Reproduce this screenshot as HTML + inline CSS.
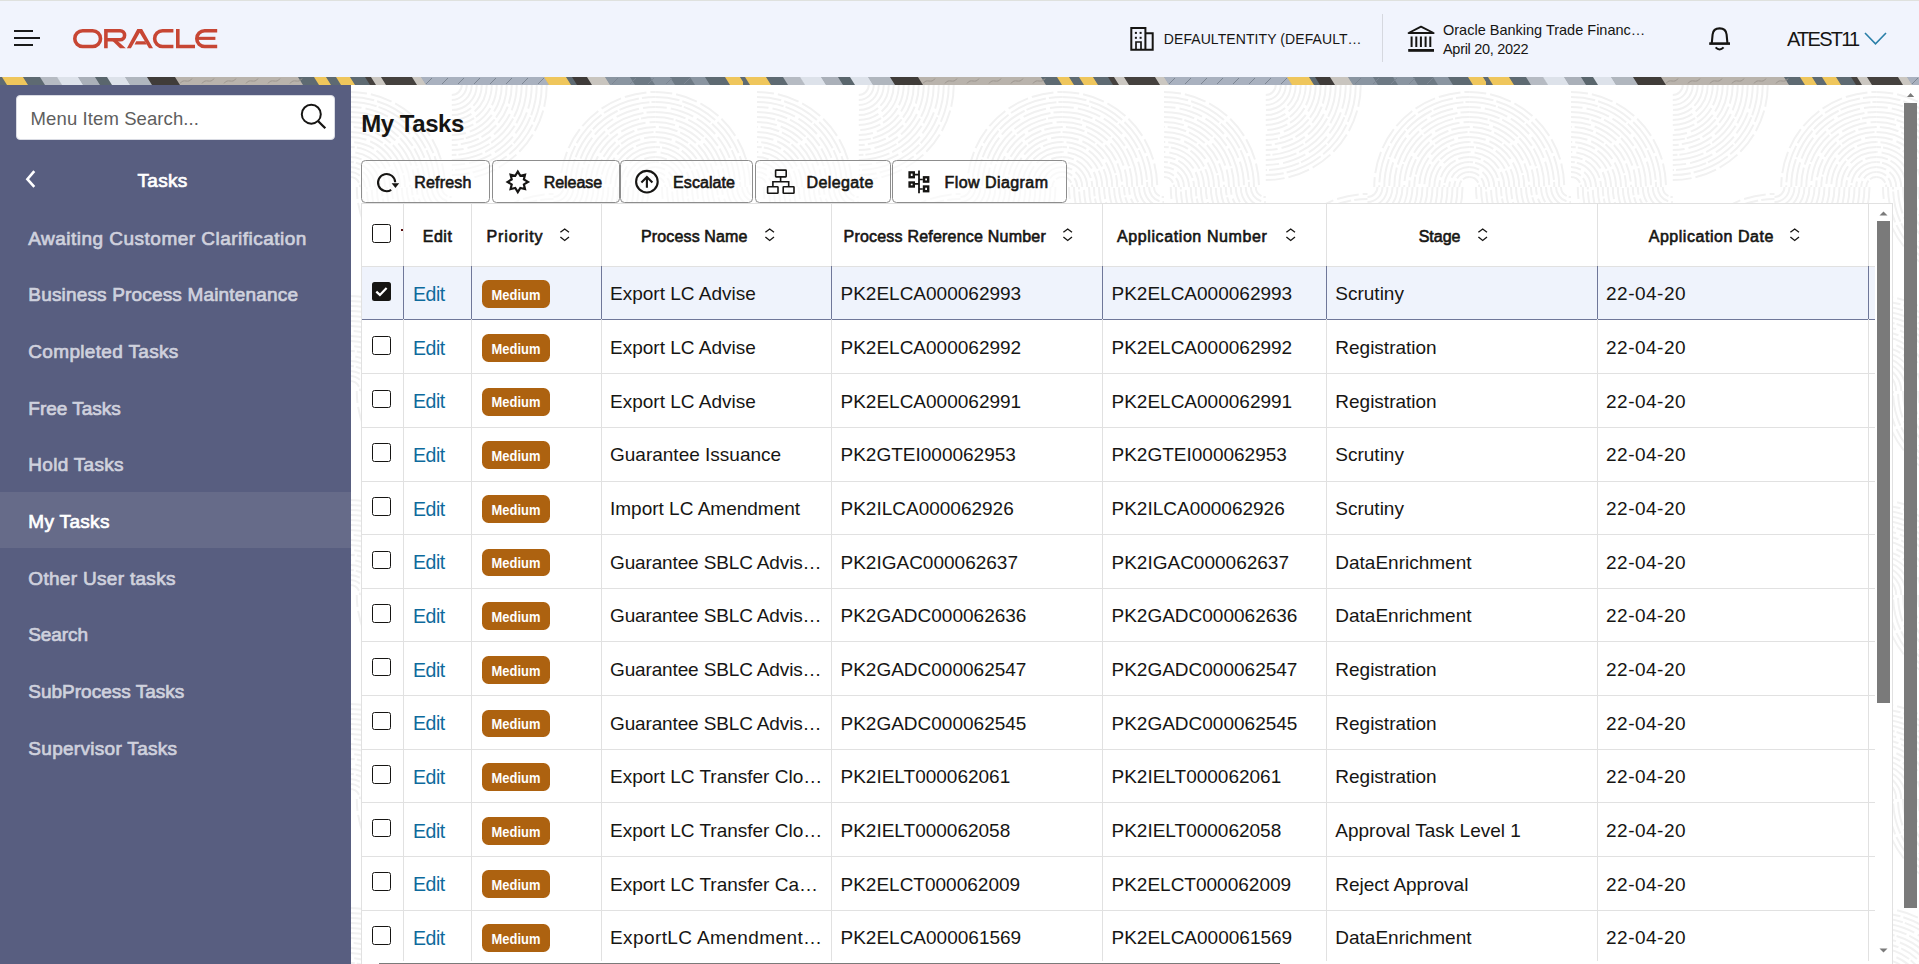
<!DOCTYPE html>
<html><head><meta charset="utf-8"><title>My Tasks</title>
<style>
html,body{margin:0;padding:0;}
body{width:1919px;height:964px;overflow:hidden;position:relative;font-family:"Liberation Sans",sans-serif;background:#fff;}
div,span,svg{box-sizing:border-box;}
.abs{position:absolute;}
</style></head><body>

<div class="abs" style="left:0;top:0;width:1919px;height:77px;background:#f1f4fd;border-top:1px solid #dfe1de;"></div>
<div class="abs" style="left:14px;top:30px;width:19px;height:2.4px;background:#1a1a1a;"></div>
<div class="abs" style="left:14px;top:37px;width:26px;height:2.4px;background:#1a1a1a;"></div>
<div class="abs" style="left:14px;top:44px;width:19px;height:2.4px;background:#1a1a1a;"></div>
<svg class="abs" style="left:73px;top:29px;overflow:visible" width="145" height="20" viewBox="0 0 145 20">
<g fill="none" stroke="#c74634" stroke-width="3.6">
<rect x="1.8" y="1.8" width="25.7" height="15.7" rx="7.85"/>
<path d="M32.9 0 V19.3 M31.1 1.8 H47.1 A4.5 4.5 0 0 1 47.1 10.8 H34"/>
<path d="M100.4 1.8 H89.5 A7.85 7.85 0 0 0 89.5 17.5 H100.4"/>
<path d="M104.8 0 V17.5 H122"/>
<path d="M144.2 1.8 H131.65 A7.85 7.85 0 0 0 131.65 17.5 H144.2"/>
</g>
<g fill="#c74634">
<polygon points="37.5,10 42.5,10 52.8,19.3 47,19.3"/>
<polygon points="53.9,19.3 64.3,0 69.1,0 80,19.3 76,19.3 66.7,3.8 57.9,19.3"/>
<polygon points="63.2,12.3 71.9,12.3 73.7,15.4 61.6,15.4"/>
<rect x="123.4" y="7.8" width="19" height="3.1"/>
</g></svg>
<svg class="abs" style="left:1125px;top:22px" width="35" height="35" viewBox="0 0 35 35">
<g fill="none" stroke="#161513" stroke-width="2">
<path d="M6.3 27.7 V6.1 H20.4 V27.7 Z M20.4 11.2 H27.7 V27.7 H20.4"/>
<path d="M11 27.7 V20 H16 V27.7" stroke-width="1.7"/>
</g>
<g fill="#161513"><rect x="9.9" y="9.9" width="2" height="2"/><rect x="14.6" y="9.9" width="2" height="2"/><rect x="9.9" y="14.8" width="2" height="2"/><rect x="14.6" y="14.8" width="2" height="2"/></g>
</svg>
<div style="position:absolute;top:30.86px;height:16.80px;line-height:16.80px;font-size:14px;font-weight:400;color:#161513;white-space:nowrap;letter-spacing:0.08px;left:1163.80px;">DEFAULTENTITY (DEFAULT…</div>
<div class="abs" style="left:1382px;top:14px;width:1px;height:48px;background:#d6d8df;"></div>
<svg class="abs" style="left:1404px;top:21px" width="35" height="35" viewBox="0 0 35 35">
<g fill="none" stroke="#161513">
<path d="M4.6 12 L17 5.6 L29.6 12 Z" stroke-width="1.9" stroke-linejoin="round"/>
<path d="M7.6 15.6 V26 M12.3 15.6 V26 M16.9 15.6 V26 M21.6 15.6 V26 M26.3 15.6 V26" stroke-width="2"/>
<path d="M4.2 29.4 H30" stroke-width="2.8"/>
</g></svg>
<div style="position:absolute;top:21.97px;height:17.40px;line-height:17.40px;font-size:14.5px;font-weight:400;color:#161513;white-space:nowrap;letter-spacing:0.0px;left:1443.00px;">Oracle Banking Trade Financ…</div>
<div style="position:absolute;top:40.77px;height:17.40px;line-height:17.40px;font-size:14.5px;font-weight:400;color:#161513;white-space:nowrap;letter-spacing:-0.3px;left:1443.00px;">April 20, 2022</div>
<svg class="abs" style="left:1702px;top:21px" width="35" height="35" viewBox="0 0 35 35">
<g fill="none" stroke="#161513" stroke-width="2.1">
<path d="M9.8 22 L10.6 13.5 C11 9.5 13.8 7.4 17.6 7.4 C21.4 7.4 24.2 9.5 24.6 13.5 L25.4 22"/>
<path d="M7.2 22.6 H28" stroke-width="2.6"/>
<path d="M13.6 26.4 Q17.6 30.6 21.6 26.4"/>
</g></svg>
<div style="position:absolute;top:27.33px;height:24.00px;line-height:24.00px;font-size:20px;font-weight:400;color:#161513;white-space:nowrap;letter-spacing:-1.75px;left:1787.00px;">ATEST11</div>
<svg class="abs" style="left:1860px;top:28px" width="30" height="20" viewBox="0 0 30 20">
<path d="M5 5 L15.5 15.8 L26 5" fill="none" stroke="#2a7fa8" stroke-width="1.6"/></svg>
<svg class="abs" style="left:0;top:77px" width="1919" height="8"><defs><pattern id="bp" x="0" y="0" width="743" height="8" patternUnits="userSpaceOnUse"><rect x="0" y="0" width="743" height="8" fill="#5e6a72"/><polygon points="0,0 2.5,0 7.5,8 5,8" fill="#5e6a72"/><polygon points="2,0 23.5,0 28.5,8 7,8" fill="#efc65c"/><polygon points="23,0 40.5,0 45.5,8 28,8" fill="#5e6a72"/><polygon points="40,0 57.5,0 62.5,8 45,8" fill="#b6bbc3"/><polygon points="57,0 78.5,0 83.5,8 62,8" fill="#dde2ea"/><polygon points="78,0 95.5,0 100.5,8 83,8" fill="#aab0b9"/><polygon points="95,0 107.5,0 112.5,8 100,8" fill="#5a666d"/><polygon points="107,0 125.5,0 130.5,8 112,8" fill="#dde2ea"/><polygon points="125,0 147.5,0 152.5,8 130,8" fill="#b0b6be"/><polygon points="147,0 175.5,0 180.5,8 152,8" fill="#403c39"/><polygon points="175,0 298.5,0 303.5,8 180,8" fill="#b9b3ac"/><polygon points="298,0 314.5,0 319.5,8 303,8" fill="#5e6a72"/><polygon points="314,0 326.5,0 331.5,8 319,8" fill="#efc65c"/><polygon points="326,0 336.5,0 341.5,8 331,8" fill="#5e6a72"/><polygon points="336,0 350.5,0 355.5,8 341,8" fill="#efc65c"/><polygon points="350,0 365.5,0 370.5,8 355,8" fill="#5e6a72"/><polygon points="365,0 371.5,0 376.5,8 370,8" fill="#45413e"/><polygon points="371,0 381.5,0 386.5,8 376,8" fill="#cbc7c1"/><polygon points="381,0 412.5,0 417.5,8 386,8" fill="#45413e"/><polygon points="412,0 421.5,0 426.5,8 417,8" fill="#cbc7c1"/><polygon points="421,0 544.5,0 549.5,8 426,8" fill="#a9b1bf"/><polygon points="544,0 566.5,0 571.5,8 549,8" fill="#efc65c"/><polygon points="566,0 572.5,0 577.5,8 571,8" fill="#5e6a72"/><polygon points="572,0 587.5,0 592.5,8 577,8" fill="#3f3b39"/><polygon points="587,0 605.5,0 610.5,8 592,8" fill="#c9c5bf"/><polygon points="605,0 630.5,0 635.5,8 610,8" fill="#8a95a1"/><polygon points="630,0 650.5,0 655.5,8 635,8" fill="#6d7984"/><polygon points="650,0 670.5,0 675.5,8 655,8" fill="#8a95a1"/><polygon points="670,0 690.5,0 695.5,8 675,8" fill="#6d7984"/><polygon points="690,0 705.5,0 710.5,8 695,8" fill="#8a95a1"/><polygon points="705,0 725.5,0 730.5,8 710,8" fill="#5e6a72"/><polygon points="725,0 740.5,0 745.5,8 730,8" fill="#efc65c"/><polygon points="740,0 743.5,0 748.5,8 745,8" fill="#5e6a72"/><path d="M180 6.5 C184 0.5 188 7.5 192 1.5" fill="none" stroke="#9d968f" stroke-width="1"/><path d="M202 6.5 C206 0.5 210 7.5 214 1.5" fill="none" stroke="#9d968f" stroke-width="1"/><path d="M224 6.5 C228 0.5 232 7.5 236 1.5" fill="none" stroke="#9d968f" stroke-width="1"/><path d="M246 6.5 C250 0.5 254 7.5 258 1.5" fill="none" stroke="#9d968f" stroke-width="1"/><path d="M268 6.5 C272 0.5 276 7.5 280 1.5" fill="none" stroke="#9d968f" stroke-width="1"/><path d="M290 6.5 C294 0.5 298 7.5 302 1.5" fill="none" stroke="#9d968f" stroke-width="1"/><path d="M426 7 L432 1" fill="none" stroke="#7d8693" stroke-width="1"/><path d="M442 7 L448 1" fill="none" stroke="#7d8693" stroke-width="1"/><path d="M458 7 L464 1" fill="none" stroke="#7d8693" stroke-width="1"/><path d="M474 7 L480 1" fill="none" stroke="#7d8693" stroke-width="1"/><path d="M490 7 L496 1" fill="none" stroke="#7d8693" stroke-width="1"/><path d="M506 7 L512 1" fill="none" stroke="#7d8693" stroke-width="1"/><path d="M522 7 L528 1" fill="none" stroke="#7d8693" stroke-width="1"/><path d="M538 7 L544 1" fill="none" stroke="#7d8693" stroke-width="1"/><path d="M612 7 L618 1" fill="none" stroke="#7d8693" stroke-width="1"/><path d="M630 7 L636 1" fill="none" stroke="#7d8693" stroke-width="1"/><path d="M648 7 L654 1" fill="none" stroke="#7d8693" stroke-width="1"/><path d="M666 7 L672 1" fill="none" stroke="#7d8693" stroke-width="1"/><path d="M684 7 L690 1" fill="none" stroke="#7d8693" stroke-width="1"/></pattern></defs><rect x="0" y="0" width="1919" height="8" fill="url(#bp)"/></svg>
<div class="abs" style="left:0;top:85px;width:351px;height:879px;background:#585e80;"></div>
<div class="abs" style="left:16px;top:95px;width:319px;height:45px;background:#fff;border-radius:4px;border:1px solid #d9dbe3;"></div>
<div style="position:absolute;top:108.16px;height:22.20px;line-height:22.20px;font-size:18.5px;font-weight:400;color:#5e5e5e;white-space:nowrap;letter-spacing:0.1px;left:30.60px;">Menu Item Search...</div>
<svg class="abs" style="left:295px;top:98px" width="35" height="35" viewBox="0 0 35 35">
<g fill="none" stroke="#161513" stroke-width="2"><circle cx="16.3" cy="16.2" r="9.5"/><path d="M23 23 L30.3 30.3" stroke-width="2.3"/></g></svg>
<svg class="abs" style="left:20px;top:165px" width="25" height="30" viewBox="0 0 25 30">
<path d="M14.3 6.2 L7.4 14.2 L14.3 21.8" fill="none" stroke="#fff" stroke-width="2.6" stroke-linejoin="miter"/></svg>
<div style="position:absolute;top:170.02px;height:22.80px;line-height:22.80px;font-size:19px;font-weight:400;color:#fff;white-space:nowrap;letter-spacing:0.27px;-webkit-text-stroke:0.7px #fff;left:62.50px;width:200px;text-align:center;">Tasks</div>
<div style="position:absolute;top:227.77px;height:22.80px;line-height:22.80px;font-size:19px;font-weight:400;color:#cfd1dd;white-space:nowrap;letter-spacing:0.48px;-webkit-text-stroke:0.7px #cfd1dd;left:28.30px;">Awaiting Customer Clarification</div>
<div style="position:absolute;top:284.42px;height:22.80px;line-height:22.80px;font-size:19px;font-weight:400;color:#cfd1dd;white-space:nowrap;letter-spacing:0.17px;-webkit-text-stroke:0.7px #cfd1dd;left:28.30px;">Business Process Maintenance</div>
<div style="position:absolute;top:341.07px;height:22.80px;line-height:22.80px;font-size:19px;font-weight:400;color:#cfd1dd;white-space:nowrap;letter-spacing:0.33px;-webkit-text-stroke:0.7px #cfd1dd;left:28.30px;">Completed Tasks</div>
<div style="position:absolute;top:397.72px;height:22.80px;line-height:22.80px;font-size:19px;font-weight:400;color:#cfd1dd;white-space:nowrap;letter-spacing:0.0px;-webkit-text-stroke:0.7px #cfd1dd;left:28.30px;">Free Tasks</div>
<div style="position:absolute;top:454.37px;height:22.80px;line-height:22.80px;font-size:19px;font-weight:400;color:#cfd1dd;white-space:nowrap;letter-spacing:0.3px;-webkit-text-stroke:0.7px #cfd1dd;left:28.30px;">Hold Tasks</div>
<div class="abs" style="left:0;top:491.85px;width:351px;height:56.65px;background:#666b89;"></div>
<div style="position:absolute;top:511.02px;height:22.80px;line-height:22.80px;font-size:19px;font-weight:400;color:#ffffff;white-space:nowrap;letter-spacing:0.33px;-webkit-text-stroke:0.7px #ffffff;left:28.30px;">My Tasks</div>
<div style="position:absolute;top:567.67px;height:22.80px;line-height:22.80px;font-size:19px;font-weight:400;color:#cfd1dd;white-space:nowrap;letter-spacing:0.31px;-webkit-text-stroke:0.7px #cfd1dd;left:28.30px;">Other User tasks</div>
<div style="position:absolute;top:624.32px;height:22.80px;line-height:22.80px;font-size:19px;font-weight:400;color:#cfd1dd;white-space:nowrap;letter-spacing:-0.1px;-webkit-text-stroke:0.7px #cfd1dd;left:28.30px;">Search</div>
<div style="position:absolute;top:680.97px;height:22.80px;line-height:22.80px;font-size:19px;font-weight:400;color:#cfd1dd;white-space:nowrap;letter-spacing:0.0px;-webkit-text-stroke:0.7px #cfd1dd;left:28.30px;">SubProcess Tasks</div>
<div style="position:absolute;top:737.62px;height:22.80px;line-height:22.80px;font-size:19px;font-weight:400;color:#cfd1dd;white-space:nowrap;letter-spacing:0.3px;-webkit-text-stroke:0.7px #cfd1dd;left:28.30px;">Supervisor Tasks</div>
<svg class="abs" style="left:351px;top:85px" width="1568" height="879"><defs><clipPath id="c0"><rect x="0.00" y="0" width="101.75" height="102"/></clipPath><clipPath id="c1"><rect x="101.75" y="0" width="101.75" height="102"/></clipPath><clipPath id="c2"><rect x="203.50" y="0" width="101.75" height="102"/></clipPath><clipPath id="c3"><rect x="305.25" y="0" width="101.75" height="102"/></clipPath><clipPath id="c4"><rect x="0.00" y="102" width="101.75" height="102"/></clipPath><clipPath id="c5"><rect x="101.75" y="102" width="101.75" height="102"/></clipPath><clipPath id="c6"><rect x="203.50" y="102" width="101.75" height="102"/></clipPath><clipPath id="c7"><rect x="305.25" y="102" width="101.75" height="102"/></clipPath><pattern id="bgp" x="-1" y="0" width="407" height="204" patternUnits="userSpaceOnUse"><g fill="none" stroke="#f1f1f1" stroke-width="2"><g clip-path="url(#c0)"><circle cx="0.00" cy="102" r="10.0" stroke-dasharray="18 2"/><circle cx="0.00" cy="102" r="15.0" stroke-dasharray="25 3"/><circle cx="0.00" cy="102" r="20.0" stroke-dasharray="32 4"/><circle cx="0.00" cy="102" r="25.0" stroke-dasharray="39 2"/><circle cx="0.00" cy="102" r="30.0" stroke-dasharray="23 3"/><circle cx="0.00" cy="102" r="35.0" stroke-dasharray="30 4"/><circle cx="0.00" cy="102" r="40.0" stroke-dasharray="37 2"/><circle cx="0.00" cy="102" r="45.0" stroke-dasharray="21 3"/><circle cx="0.00" cy="102" r="50.0" stroke-dasharray="28 4"/><circle cx="0.00" cy="102" r="55.0" stroke-dasharray="35 2"/><circle cx="0.00" cy="102" r="60.0" stroke-dasharray="19 3"/><circle cx="0.00" cy="102" r="65.0" stroke-dasharray="26 4"/><circle cx="0.00" cy="102" r="70.0" stroke-dasharray="33 2"/><circle cx="0.00" cy="102" r="75.0" stroke-dasharray="40 3"/><circle cx="0.00" cy="102" r="80.0" stroke-dasharray="24 4"/><circle cx="0.00" cy="102" r="85.0" stroke-dasharray="31 2"/><circle cx="0.00" cy="102" r="90.0" stroke-dasharray="38 3"/><circle cx="0.00" cy="102" r="95.0" stroke-dasharray="22 4"/></g><g clip-path="url(#c1)"><circle cx="101.75" cy="0" r="10.0" stroke-dasharray="18 2"/><circle cx="101.75" cy="0" r="15.0" stroke-dasharray="25 3"/><circle cx="101.75" cy="0" r="20.0" stroke-dasharray="32 4"/><circle cx="101.75" cy="0" r="25.0" stroke-dasharray="39 2"/><circle cx="101.75" cy="0" r="30.0" stroke-dasharray="23 3"/><circle cx="101.75" cy="0" r="35.0" stroke-dasharray="30 4"/><circle cx="101.75" cy="0" r="40.0" stroke-dasharray="37 2"/><circle cx="101.75" cy="0" r="45.0" stroke-dasharray="21 3"/><circle cx="101.75" cy="0" r="50.0" stroke-dasharray="28 4"/><circle cx="101.75" cy="0" r="55.0" stroke-dasharray="35 2"/><circle cx="101.75" cy="0" r="60.0" stroke-dasharray="19 3"/><circle cx="101.75" cy="0" r="65.0" stroke-dasharray="26 4"/><circle cx="101.75" cy="0" r="70.0" stroke-dasharray="33 2"/><circle cx="101.75" cy="0" r="75.0" stroke-dasharray="40 3"/><circle cx="101.75" cy="0" r="80.0" stroke-dasharray="24 4"/><circle cx="101.75" cy="0" r="85.0" stroke-dasharray="31 2"/><circle cx="101.75" cy="0" r="90.0" stroke-dasharray="38 3"/><circle cx="101.75" cy="0" r="95.0" stroke-dasharray="22 4"/></g><g clip-path="url(#c2)"><circle cx="305.25" cy="102" r="10.0" stroke-dasharray="18 2"/><circle cx="305.25" cy="102" r="15.0" stroke-dasharray="25 3"/><circle cx="305.25" cy="102" r="20.0" stroke-dasharray="32 4"/><circle cx="305.25" cy="102" r="25.0" stroke-dasharray="39 2"/><circle cx="305.25" cy="102" r="30.0" stroke-dasharray="23 3"/><circle cx="305.25" cy="102" r="35.0" stroke-dasharray="30 4"/><circle cx="305.25" cy="102" r="40.0" stroke-dasharray="37 2"/><circle cx="305.25" cy="102" r="45.0" stroke-dasharray="21 3"/><circle cx="305.25" cy="102" r="50.0" stroke-dasharray="28 4"/><circle cx="305.25" cy="102" r="55.0" stroke-dasharray="35 2"/><circle cx="305.25" cy="102" r="60.0" stroke-dasharray="19 3"/><circle cx="305.25" cy="102" r="65.0" stroke-dasharray="26 4"/><circle cx="305.25" cy="102" r="70.0" stroke-dasharray="33 2"/><circle cx="305.25" cy="102" r="75.0" stroke-dasharray="40 3"/><circle cx="305.25" cy="102" r="80.0" stroke-dasharray="24 4"/><circle cx="305.25" cy="102" r="85.0" stroke-dasharray="31 2"/><circle cx="305.25" cy="102" r="90.0" stroke-dasharray="38 3"/><circle cx="305.25" cy="102" r="95.0" stroke-dasharray="22 4"/></g><g clip-path="url(#c3)"><circle cx="305.25" cy="102" r="10.0" stroke-dasharray="18 2"/><circle cx="305.25" cy="102" r="15.0" stroke-dasharray="25 3"/><circle cx="305.25" cy="102" r="20.0" stroke-dasharray="32 4"/><circle cx="305.25" cy="102" r="25.0" stroke-dasharray="39 2"/><circle cx="305.25" cy="102" r="30.0" stroke-dasharray="23 3"/><circle cx="305.25" cy="102" r="35.0" stroke-dasharray="30 4"/><circle cx="305.25" cy="102" r="40.0" stroke-dasharray="37 2"/><circle cx="305.25" cy="102" r="45.0" stroke-dasharray="21 3"/><circle cx="305.25" cy="102" r="50.0" stroke-dasharray="28 4"/><circle cx="305.25" cy="102" r="55.0" stroke-dasharray="35 2"/><circle cx="305.25" cy="102" r="60.0" stroke-dasharray="19 3"/><circle cx="305.25" cy="102" r="65.0" stroke-dasharray="26 4"/><circle cx="305.25" cy="102" r="70.0" stroke-dasharray="33 2"/><circle cx="305.25" cy="102" r="75.0" stroke-dasharray="40 3"/><circle cx="305.25" cy="102" r="80.0" stroke-dasharray="24 4"/><circle cx="305.25" cy="102" r="85.0" stroke-dasharray="31 2"/><circle cx="305.25" cy="102" r="90.0" stroke-dasharray="38 3"/><circle cx="305.25" cy="102" r="95.0" stroke-dasharray="22 4"/></g><g clip-path="url(#c4)"><circle cx="101.75" cy="102" r="10.0" stroke-dasharray="18 2"/><circle cx="101.75" cy="102" r="15.0" stroke-dasharray="25 3"/><circle cx="101.75" cy="102" r="20.0" stroke-dasharray="32 4"/><circle cx="101.75" cy="102" r="25.0" stroke-dasharray="39 2"/><circle cx="101.75" cy="102" r="30.0" stroke-dasharray="23 3"/><circle cx="101.75" cy="102" r="35.0" stroke-dasharray="30 4"/><circle cx="101.75" cy="102" r="40.0" stroke-dasharray="37 2"/><circle cx="101.75" cy="102" r="45.0" stroke-dasharray="21 3"/><circle cx="101.75" cy="102" r="50.0" stroke-dasharray="28 4"/><circle cx="101.75" cy="102" r="55.0" stroke-dasharray="35 2"/><circle cx="101.75" cy="102" r="60.0" stroke-dasharray="19 3"/><circle cx="101.75" cy="102" r="65.0" stroke-dasharray="26 4"/><circle cx="101.75" cy="102" r="70.0" stroke-dasharray="33 2"/><circle cx="101.75" cy="102" r="75.0" stroke-dasharray="40 3"/><circle cx="101.75" cy="102" r="80.0" stroke-dasharray="24 4"/><circle cx="101.75" cy="102" r="85.0" stroke-dasharray="31 2"/><circle cx="101.75" cy="102" r="90.0" stroke-dasharray="38 3"/><circle cx="101.75" cy="102" r="95.0" stroke-dasharray="22 4"/></g><g clip-path="url(#c5)"><circle cx="203.50" cy="204" r="10.0" stroke-dasharray="18 2"/><circle cx="203.50" cy="204" r="15.0" stroke-dasharray="25 3"/><circle cx="203.50" cy="204" r="20.0" stroke-dasharray="32 4"/><circle cx="203.50" cy="204" r="25.0" stroke-dasharray="39 2"/><circle cx="203.50" cy="204" r="30.0" stroke-dasharray="23 3"/><circle cx="203.50" cy="204" r="35.0" stroke-dasharray="30 4"/><circle cx="203.50" cy="204" r="40.0" stroke-dasharray="37 2"/><circle cx="203.50" cy="204" r="45.0" stroke-dasharray="21 3"/><circle cx="203.50" cy="204" r="50.0" stroke-dasharray="28 4"/><circle cx="203.50" cy="204" r="55.0" stroke-dasharray="35 2"/><circle cx="203.50" cy="204" r="60.0" stroke-dasharray="19 3"/><circle cx="203.50" cy="204" r="65.0" stroke-dasharray="26 4"/><circle cx="203.50" cy="204" r="70.0" stroke-dasharray="33 2"/><circle cx="203.50" cy="204" r="75.0" stroke-dasharray="40 3"/><circle cx="203.50" cy="204" r="80.0" stroke-dasharray="24 4"/><circle cx="203.50" cy="204" r="85.0" stroke-dasharray="31 2"/><circle cx="203.50" cy="204" r="90.0" stroke-dasharray="38 3"/><circle cx="203.50" cy="204" r="95.0" stroke-dasharray="22 4"/></g><g clip-path="url(#c6)"><circle cx="203.50" cy="102" r="10.0" stroke-dasharray="18 2"/><circle cx="203.50" cy="102" r="15.0" stroke-dasharray="25 3"/><circle cx="203.50" cy="102" r="20.0" stroke-dasharray="32 4"/><circle cx="203.50" cy="102" r="25.0" stroke-dasharray="39 2"/><circle cx="203.50" cy="102" r="30.0" stroke-dasharray="23 3"/><circle cx="203.50" cy="102" r="35.0" stroke-dasharray="30 4"/><circle cx="203.50" cy="102" r="40.0" stroke-dasharray="37 2"/><circle cx="203.50" cy="102" r="45.0" stroke-dasharray="21 3"/><circle cx="203.50" cy="102" r="50.0" stroke-dasharray="28 4"/><circle cx="203.50" cy="102" r="55.0" stroke-dasharray="35 2"/><circle cx="203.50" cy="102" r="60.0" stroke-dasharray="19 3"/><circle cx="203.50" cy="102" r="65.0" stroke-dasharray="26 4"/><circle cx="203.50" cy="102" r="70.0" stroke-dasharray="33 2"/><circle cx="203.50" cy="102" r="75.0" stroke-dasharray="40 3"/><circle cx="203.50" cy="102" r="80.0" stroke-dasharray="24 4"/><circle cx="203.50" cy="102" r="85.0" stroke-dasharray="31 2"/><circle cx="203.50" cy="102" r="90.0" stroke-dasharray="38 3"/><circle cx="203.50" cy="102" r="95.0" stroke-dasharray="22 4"/></g><g clip-path="url(#c7)"><circle cx="407.00" cy="102" r="10.0" stroke-dasharray="18 2"/><circle cx="407.00" cy="102" r="15.0" stroke-dasharray="25 3"/><circle cx="407.00" cy="102" r="20.0" stroke-dasharray="32 4"/><circle cx="407.00" cy="102" r="25.0" stroke-dasharray="39 2"/><circle cx="407.00" cy="102" r="30.0" stroke-dasharray="23 3"/><circle cx="407.00" cy="102" r="35.0" stroke-dasharray="30 4"/><circle cx="407.00" cy="102" r="40.0" stroke-dasharray="37 2"/><circle cx="407.00" cy="102" r="45.0" stroke-dasharray="21 3"/><circle cx="407.00" cy="102" r="50.0" stroke-dasharray="28 4"/><circle cx="407.00" cy="102" r="55.0" stroke-dasharray="35 2"/><circle cx="407.00" cy="102" r="60.0" stroke-dasharray="19 3"/><circle cx="407.00" cy="102" r="65.0" stroke-dasharray="26 4"/><circle cx="407.00" cy="102" r="70.0" stroke-dasharray="33 2"/><circle cx="407.00" cy="102" r="75.0" stroke-dasharray="40 3"/><circle cx="407.00" cy="102" r="80.0" stroke-dasharray="24 4"/><circle cx="407.00" cy="102" r="85.0" stroke-dasharray="31 2"/><circle cx="407.00" cy="102" r="90.0" stroke-dasharray="38 3"/><circle cx="407.00" cy="102" r="95.0" stroke-dasharray="22 4"/></g></g></pattern></defs><rect width="1568" height="879" fill="#fff"/><rect width="1568" height="879" fill="url(#bgp)"/></svg>
<div style="position:absolute;top:110.48px;height:28.80px;line-height:28.80px;font-size:24px;font-weight:700;color:#161513;white-space:nowrap;letter-spacing:-0.45px;left:361.20px;">My Tasks</div>
<div class="abs" style="left:361px;top:160px;width:129.0px;height:42.6px;border:1px solid #8d8d8d;border-radius:4.5px;background:rgba(255,255,255,0.6);"></div>
<svg class="abs" style="left:370px;top:165px" width="38" height="35" viewBox="0 0 38 35"><g fill="none" stroke="#161513" stroke-width="2.1"><path d="M21.2 24.9 A8.6 8.6 0 1 1 25.2 17.2"/></g>
<polygon points="21.6,18.3 29.2,18.3 25.4,22.9" fill="#161513"/></svg>
<div style="position:absolute;top:173.48px;height:19.20px;line-height:19.20px;font-size:16px;font-weight:400;color:#161513;white-space:nowrap;letter-spacing:0.2px;-webkit-text-stroke:0.6px #161513;left:414.20px;">Refresh</div>
<div class="abs" style="left:491.5px;top:160px;width:128.0px;height:42.6px;border:1px solid #8d8d8d;border-radius:4.5px;background:rgba(255,255,255,0.6);"></div>
<svg class="abs" style="left:500px;top:165px" width="38" height="35" viewBox="0 0 38 35"><polygon points="17.80,6.70 20.33,10.80 25.01,9.69 23.90,14.37 28.00,16.90 23.90,19.43 25.01,24.11 20.33,23.00 17.80,27.10 15.27,23.00 10.59,24.11 11.70,19.43 7.60,16.90 11.70,14.37 10.59,9.69 15.27,10.80" fill="none" stroke="#161513" stroke-width="2.2" stroke-linejoin="miter"/></svg>
<div style="position:absolute;top:173.48px;height:19.20px;line-height:19.20px;font-size:16px;font-weight:400;color:#161513;white-space:nowrap;letter-spacing:-0.05px;-webkit-text-stroke:0.6px #161513;left:543.70px;">Release</div>
<div class="abs" style="left:620.3px;top:160px;width:133.2px;height:42.6px;border:1px solid #8d8d8d;border-radius:4.5px;background:rgba(255,255,255,0.6);"></div>
<svg class="abs" style="left:630px;top:165px" width="38" height="35" viewBox="0 0 38 35"><g fill="none" stroke="#161513" stroke-width="2.1"><circle cx="16.9" cy="16.7" r="10.8"/>
<path d="M16.9 22.8 V11.8 M11.4 17.4 L16.9 11.9 L22.4 17.4"/></g></svg>
<div style="position:absolute;top:173.48px;height:19.20px;line-height:19.20px;font-size:16px;font-weight:400;color:#161513;white-space:nowrap;letter-spacing:0.07px;-webkit-text-stroke:0.6px #161513;left:673.10px;">Escalate</div>
<div class="abs" style="left:754.7px;top:160px;width:136.3px;height:42.6px;border:1px solid #8d8d8d;border-radius:4.5px;background:rgba(255,255,255,0.6);"></div>
<svg class="abs" style="left:762px;top:165px" width="38" height="35" viewBox="0 0 38 35"><g fill="none" stroke="#161513" stroke-width="1.6"><rect x="13.6" y="5.1" width="10.6" height="6.8" rx="0.6"/>
<rect x="5.6" y="21.7" width="10.4" height="6.6" rx="0.6"/><rect x="21.2" y="21.7" width="10.8" height="6.6" rx="0.6"/>
<path d="M18.6 11.9 V16.7 M10.9 21.7 V16.7 H26.7 V21.7"/></g></svg>
<div style="position:absolute;top:173.48px;height:19.20px;line-height:19.20px;font-size:16px;font-weight:400;color:#161513;white-space:nowrap;letter-spacing:0.39px;-webkit-text-stroke:0.6px #161513;left:806.50px;">Delegate</div>
<div class="abs" style="left:892.3px;top:160px;width:174.7px;height:42.6px;border:1px solid #8d8d8d;border-radius:4.5px;background:rgba(255,255,255,0.6);"></div>
<svg class="abs" style="left:903px;top:165px" width="38" height="35" viewBox="0 0 38 35"><g fill="none" stroke="#161513"><path d="M16 5.4 V28.3" stroke-width="1.8"/>
<rect x="6.6" y="7.4" width="4.2" height="4.8" stroke-width="2.4"/><rect x="6.6" y="17.5" width="4.2" height="4.0" stroke-width="2.4"/>
<rect x="21" y="12.3" width="4.2" height="4.3" stroke-width="2.4"/><rect x="21" y="21.5" width="4.2" height="4.7" stroke-width="2.4"/>
<path d="M12 9.6 H16 M12 18.9 H16 M16 14.5 H19.8 M16 24 H19.8" stroke-width="1.6"/></g></svg>
<div style="position:absolute;top:173.48px;height:19.20px;line-height:19.20px;font-size:16px;font-weight:400;color:#161513;white-space:nowrap;letter-spacing:0.43px;-webkit-text-stroke:0.6px #161513;left:944.60px;">Flow Diagram</div>
<div class="abs" style="left:361px;top:203px;width:1532px;height:763px;border:1px solid #e1e1e1;background:#fff;"></div>
<div class="abs" style="left:362px;top:266.40px;width:1513px;height:52.60px;background:#eff3fc;"></div>
<div class="abs" style="left:362px;top:265.90px;width:1513px;height:1px;background:#e1e1e1;"></div>
<div class="abs" style="left:362px;top:319.00px;width:1513px;height:1px;background:#6f7799;"></div>
<div class="abs" style="left:362px;top:373.20px;width:1513px;height:1px;background:#e1e1e1;"></div>
<div class="abs" style="left:362px;top:426.85px;width:1513px;height:1px;background:#e1e1e1;"></div>
<div class="abs" style="left:362px;top:480.50px;width:1513px;height:1px;background:#e1e1e1;"></div>
<div class="abs" style="left:362px;top:534.15px;width:1513px;height:1px;background:#e1e1e1;"></div>
<div class="abs" style="left:362px;top:587.80px;width:1513px;height:1px;background:#e1e1e1;"></div>
<div class="abs" style="left:362px;top:641.45px;width:1513px;height:1px;background:#e1e1e1;"></div>
<div class="abs" style="left:362px;top:695.10px;width:1513px;height:1px;background:#e1e1e1;"></div>
<div class="abs" style="left:362px;top:748.75px;width:1513px;height:1px;background:#e1e1e1;"></div>
<div class="abs" style="left:362px;top:802.40px;width:1513px;height:1px;background:#e1e1e1;"></div>
<div class="abs" style="left:362px;top:856.05px;width:1513px;height:1px;background:#e1e1e1;"></div>
<div class="abs" style="left:362px;top:909.70px;width:1513px;height:1px;background:#e1e1e1;"></div>
<div class="abs" style="left:402.90px;top:203px;width:1px;height:758px;background:#e1e1e1;"></div>
<div class="abs" style="left:402.90px;top:266.40px;width:1px;height:52.60px;background:#6f7799;"></div>
<div class="abs" style="left:470.70px;top:203px;width:1px;height:758px;background:#e1e1e1;"></div>
<div class="abs" style="left:470.70px;top:266.40px;width:1px;height:52.60px;background:#6f7799;"></div>
<div class="abs" style="left:600.80px;top:203px;width:1px;height:758px;background:#e1e1e1;"></div>
<div class="abs" style="left:600.80px;top:266.40px;width:1px;height:52.60px;background:#6f7799;"></div>
<div class="abs" style="left:830.90px;top:203px;width:1px;height:758px;background:#e1e1e1;"></div>
<div class="abs" style="left:830.90px;top:266.40px;width:1px;height:52.60px;background:#6f7799;"></div>
<div class="abs" style="left:1101.90px;top:203px;width:1px;height:758px;background:#e1e1e1;"></div>
<div class="abs" style="left:1101.90px;top:266.40px;width:1px;height:52.60px;background:#6f7799;"></div>
<div class="abs" style="left:1325.90px;top:203px;width:1px;height:758px;background:#e1e1e1;"></div>
<div class="abs" style="left:1325.90px;top:266.40px;width:1px;height:52.60px;background:#6f7799;"></div>
<div class="abs" style="left:1597.10px;top:203px;width:1px;height:758px;background:#e1e1e1;"></div>
<div class="abs" style="left:1597.10px;top:266.40px;width:1px;height:52.60px;background:#6f7799;"></div>
<div class="abs" style="left:1868.30px;top:203px;width:1px;height:758px;background:#e1e1e1;"></div>
<div class="abs" style="left:1868.30px;top:266.40px;width:1px;height:52.60px;background:#6f7799;"></div>
<div class="abs" style="left:372.3px;top:224.4px;width:18.6px;height:18.6px;border:1.8px solid #161513;border-radius:2.5px;"></div>
<div class="abs" style="left:401.3px;top:229px;width:1.6px;height:2.2px;background:#5a1010;"></div>
<div style="position:absolute;top:227.38px;height:19.20px;line-height:19.20px;font-size:16px;font-weight:400;color:#161513;white-space:nowrap;letter-spacing:0.5px;-webkit-text-stroke:0.6px #161513;left:407.60px;width:60px;text-align:center;">Edit</div>
<div style="position:absolute;top:227.38px;height:19.20px;line-height:19.20px;font-size:16px;font-weight:400;color:#161513;white-space:nowrap;letter-spacing:0.9px;-webkit-text-stroke:0.6px #161513;left:486.50px;">Priority</div>
<svg class="abs" style="left:559.3px;top:228px" width="12" height="14" viewBox="0 0 12 14"><path d="M1.4 4.3 L5.7 1 L10 4.3 M1.4 9 L5.7 12.5 L10 9" fill="none" stroke="#161513" stroke-width="1.35"/></svg>
<div style="position:absolute;top:227.38px;height:19.20px;line-height:19.20px;font-size:16px;font-weight:400;color:#161513;white-space:nowrap;letter-spacing:0.14px;-webkit-text-stroke:0.6px #161513;left:641.00px;">Process Name</div>
<svg class="abs" style="left:763.8px;top:228px" width="12" height="14" viewBox="0 0 12 14"><path d="M1.4 4.3 L5.7 1 L10 4.3 M1.4 9 L5.7 12.5 L10 9" fill="none" stroke="#161513" stroke-width="1.35"/></svg>
<div style="position:absolute;top:227.38px;height:19.20px;line-height:19.20px;font-size:16px;font-weight:400;color:#161513;white-space:nowrap;letter-spacing:0.21px;-webkit-text-stroke:0.6px #161513;left:843.50px;">Process Reference Number</div>
<svg class="abs" style="left:1062px;top:228px" width="12" height="14" viewBox="0 0 12 14"><path d="M1.4 4.3 L5.7 1 L10 4.3 M1.4 9 L5.7 12.5 L10 9" fill="none" stroke="#161513" stroke-width="1.35"/></svg>
<div style="position:absolute;top:227.38px;height:19.20px;line-height:19.20px;font-size:16px;font-weight:400;color:#161513;white-space:nowrap;letter-spacing:0.6px;-webkit-text-stroke:0.6px #161513;left:1117.00px;">Application Number</div>
<svg class="abs" style="left:1284.5px;top:228px" width="12" height="14" viewBox="0 0 12 14"><path d="M1.4 4.3 L5.7 1 L10 4.3 M1.4 9 L5.7 12.5 L10 9" fill="none" stroke="#161513" stroke-width="1.35"/></svg>
<div style="position:absolute;top:227.38px;height:19.20px;line-height:19.20px;font-size:16px;font-weight:400;color:#161513;white-space:nowrap;letter-spacing:0.0px;-webkit-text-stroke:0.6px #161513;left:1418.70px;">Stage</div>
<svg class="abs" style="left:1476.9px;top:228px" width="12" height="14" viewBox="0 0 12 14"><path d="M1.4 4.3 L5.7 1 L10 4.3 M1.4 9 L5.7 12.5 L10 9" fill="none" stroke="#161513" stroke-width="1.35"/></svg>
<div style="position:absolute;top:227.38px;height:19.20px;line-height:19.20px;font-size:16px;font-weight:400;color:#161513;white-space:nowrap;letter-spacing:0.54px;-webkit-text-stroke:0.6px #161513;left:1648.70px;">Application Date</div>
<svg class="abs" style="left:1789.2px;top:228px" width="12" height="14" viewBox="0 0 12 14"><path d="M1.4 4.3 L5.7 1 L10 4.3 M1.4 9 L5.7 12.5 L10 9" fill="none" stroke="#161513" stroke-width="1.35"/></svg>
<div class="abs" style="left:372.2px;top:282.32px;width:18.6px;height:18.6px;background:#161513;border-radius:2.5px;"></div>
<svg class="abs" style="left:372.2px;top:282.32px" width="19" height="19" viewBox="0 0 19 19"><path d="M4.3 9.6 L7.9 12.9 L14.6 6" fill="none" stroke="#fff" stroke-width="2.2"/></svg>
<div style="position:absolute;top:283.15px;height:23.40px;line-height:23.40px;font-size:19.5px;font-weight:400;color:#0e6a9c;white-space:nowrap;letter-spacing:-0.45px;left:413.00px;">Edit</div>
<div class="abs" style="left:482px;top:280.32px;width:67.8px;height:27.9px;background:#ad6210;border-radius:6.5px;"></div>
<div style="position:absolute;top:286.10px;height:18.00px;line-height:18.00px;font-size:15px;font-weight:700;color:#fff;white-space:nowrap;left:481.90px;width:68px;text-align:center;transform:scaleX(0.86);">Medium</div>
<div style="position:absolute;top:283.44px;height:22.80px;line-height:22.80px;font-size:19px;font-weight:400;color:#161513;white-space:nowrap;left:610.00px;">Export LC Advise</div>
<div style="position:absolute;top:283.44px;height:22.80px;line-height:22.80px;font-size:19px;font-weight:400;color:#161513;white-space:nowrap;left:840.50px;">PK2ELCA000062993</div>
<div style="position:absolute;top:283.44px;height:22.80px;line-height:22.80px;font-size:19px;font-weight:400;color:#161513;white-space:nowrap;left:1111.50px;">PK2ELCA000062993</div>
<div style="position:absolute;top:283.44px;height:22.80px;line-height:22.80px;font-size:19px;font-weight:400;color:#161513;white-space:nowrap;left:1335.30px;">Scrutiny</div>
<div style="position:absolute;top:283.44px;height:22.80px;line-height:22.80px;font-size:19px;font-weight:400;color:#161513;white-space:nowrap;letter-spacing:0.5px;left:1606.00px;">22-04-20</div>
<div class="abs" style="left:372.2px;top:335.97px;width:18.6px;height:18.6px;border:1.8px solid #161513;border-radius:2.5px;"></div>
<div style="position:absolute;top:336.80px;height:23.40px;line-height:23.40px;font-size:19.5px;font-weight:400;color:#0e6a9c;white-space:nowrap;letter-spacing:-0.45px;left:413.00px;">Edit</div>
<div class="abs" style="left:482px;top:333.97px;width:67.8px;height:27.9px;background:#ad6210;border-radius:6.5px;"></div>
<div style="position:absolute;top:339.75px;height:18.00px;line-height:18.00px;font-size:15px;font-weight:700;color:#fff;white-space:nowrap;left:481.90px;width:68px;text-align:center;transform:scaleX(0.86);">Medium</div>
<div style="position:absolute;top:337.09px;height:22.80px;line-height:22.80px;font-size:19px;font-weight:400;color:#161513;white-space:nowrap;left:610.00px;">Export LC Advise</div>
<div style="position:absolute;top:337.09px;height:22.80px;line-height:22.80px;font-size:19px;font-weight:400;color:#161513;white-space:nowrap;left:840.50px;">PK2ELCA000062992</div>
<div style="position:absolute;top:337.09px;height:22.80px;line-height:22.80px;font-size:19px;font-weight:400;color:#161513;white-space:nowrap;left:1111.50px;">PK2ELCA000062992</div>
<div style="position:absolute;top:337.09px;height:22.80px;line-height:22.80px;font-size:19px;font-weight:400;color:#161513;white-space:nowrap;left:1335.30px;">Registration</div>
<div style="position:absolute;top:337.09px;height:22.80px;line-height:22.80px;font-size:19px;font-weight:400;color:#161513;white-space:nowrap;letter-spacing:0.5px;left:1606.00px;">22-04-20</div>
<div class="abs" style="left:372.2px;top:389.62px;width:18.6px;height:18.6px;border:1.8px solid #161513;border-radius:2.5px;"></div>
<div style="position:absolute;top:390.45px;height:23.40px;line-height:23.40px;font-size:19.5px;font-weight:400;color:#0e6a9c;white-space:nowrap;letter-spacing:-0.45px;left:413.00px;">Edit</div>
<div class="abs" style="left:482px;top:387.62px;width:67.8px;height:27.9px;background:#ad6210;border-radius:6.5px;"></div>
<div style="position:absolute;top:393.40px;height:18.00px;line-height:18.00px;font-size:15px;font-weight:700;color:#fff;white-space:nowrap;left:481.90px;width:68px;text-align:center;transform:scaleX(0.86);">Medium</div>
<div style="position:absolute;top:390.74px;height:22.80px;line-height:22.80px;font-size:19px;font-weight:400;color:#161513;white-space:nowrap;left:610.00px;">Export LC Advise</div>
<div style="position:absolute;top:390.74px;height:22.80px;line-height:22.80px;font-size:19px;font-weight:400;color:#161513;white-space:nowrap;left:840.50px;">PK2ELCA000062991</div>
<div style="position:absolute;top:390.74px;height:22.80px;line-height:22.80px;font-size:19px;font-weight:400;color:#161513;white-space:nowrap;left:1111.50px;">PK2ELCA000062991</div>
<div style="position:absolute;top:390.74px;height:22.80px;line-height:22.80px;font-size:19px;font-weight:400;color:#161513;white-space:nowrap;left:1335.30px;">Registration</div>
<div style="position:absolute;top:390.74px;height:22.80px;line-height:22.80px;font-size:19px;font-weight:400;color:#161513;white-space:nowrap;letter-spacing:0.5px;left:1606.00px;">22-04-20</div>
<div class="abs" style="left:372.2px;top:443.27px;width:18.6px;height:18.6px;border:1.8px solid #161513;border-radius:2.5px;"></div>
<div style="position:absolute;top:444.10px;height:23.40px;line-height:23.40px;font-size:19.5px;font-weight:400;color:#0e6a9c;white-space:nowrap;letter-spacing:-0.45px;left:413.00px;">Edit</div>
<div class="abs" style="left:482px;top:441.27px;width:67.8px;height:27.9px;background:#ad6210;border-radius:6.5px;"></div>
<div style="position:absolute;top:447.05px;height:18.00px;line-height:18.00px;font-size:15px;font-weight:700;color:#fff;white-space:nowrap;left:481.90px;width:68px;text-align:center;transform:scaleX(0.86);">Medium</div>
<div style="position:absolute;top:444.39px;height:22.80px;line-height:22.80px;font-size:19px;font-weight:400;color:#161513;white-space:nowrap;left:610.00px;">Guarantee Issuance</div>
<div style="position:absolute;top:444.39px;height:22.80px;line-height:22.80px;font-size:19px;font-weight:400;color:#161513;white-space:nowrap;left:840.50px;">PK2GTEI000062953</div>
<div style="position:absolute;top:444.39px;height:22.80px;line-height:22.80px;font-size:19px;font-weight:400;color:#161513;white-space:nowrap;left:1111.50px;">PK2GTEI000062953</div>
<div style="position:absolute;top:444.39px;height:22.80px;line-height:22.80px;font-size:19px;font-weight:400;color:#161513;white-space:nowrap;left:1335.30px;">Scrutiny</div>
<div style="position:absolute;top:444.39px;height:22.80px;line-height:22.80px;font-size:19px;font-weight:400;color:#161513;white-space:nowrap;letter-spacing:0.5px;left:1606.00px;">22-04-20</div>
<div class="abs" style="left:372.2px;top:496.92px;width:18.6px;height:18.6px;border:1.8px solid #161513;border-radius:2.5px;"></div>
<div style="position:absolute;top:497.75px;height:23.40px;line-height:23.40px;font-size:19.5px;font-weight:400;color:#0e6a9c;white-space:nowrap;letter-spacing:-0.45px;left:413.00px;">Edit</div>
<div class="abs" style="left:482px;top:494.92px;width:67.8px;height:27.9px;background:#ad6210;border-radius:6.5px;"></div>
<div style="position:absolute;top:500.70px;height:18.00px;line-height:18.00px;font-size:15px;font-weight:700;color:#fff;white-space:nowrap;left:481.90px;width:68px;text-align:center;transform:scaleX(0.86);">Medium</div>
<div style="position:absolute;top:498.04px;height:22.80px;line-height:22.80px;font-size:19px;font-weight:400;color:#161513;white-space:nowrap;left:610.00px;">Import LC Amendment</div>
<div style="position:absolute;top:498.04px;height:22.80px;line-height:22.80px;font-size:19px;font-weight:400;color:#161513;white-space:nowrap;left:840.50px;">PK2ILCA000062926</div>
<div style="position:absolute;top:498.04px;height:22.80px;line-height:22.80px;font-size:19px;font-weight:400;color:#161513;white-space:nowrap;left:1111.50px;">PK2ILCA000062926</div>
<div style="position:absolute;top:498.04px;height:22.80px;line-height:22.80px;font-size:19px;font-weight:400;color:#161513;white-space:nowrap;left:1335.30px;">Scrutiny</div>
<div style="position:absolute;top:498.04px;height:22.80px;line-height:22.80px;font-size:19px;font-weight:400;color:#161513;white-space:nowrap;letter-spacing:0.5px;left:1606.00px;">22-04-20</div>
<div class="abs" style="left:372.2px;top:550.58px;width:18.6px;height:18.6px;border:1.8px solid #161513;border-radius:2.5px;"></div>
<div style="position:absolute;top:551.40px;height:23.40px;line-height:23.40px;font-size:19.5px;font-weight:400;color:#0e6a9c;white-space:nowrap;letter-spacing:-0.45px;left:413.00px;">Edit</div>
<div class="abs" style="left:482px;top:548.58px;width:67.8px;height:27.9px;background:#ad6210;border-radius:6.5px;"></div>
<div style="position:absolute;top:554.35px;height:18.00px;line-height:18.00px;font-size:15px;font-weight:700;color:#fff;white-space:nowrap;left:481.90px;width:68px;text-align:center;transform:scaleX(0.86);">Medium</div>
<div style="position:absolute;top:551.69px;height:22.80px;line-height:22.80px;font-size:19px;font-weight:400;color:#161513;white-space:nowrap;letter-spacing:-0.14px;left:610.00px;">Guarantee SBLC Advis…</div>
<div style="position:absolute;top:551.69px;height:22.80px;line-height:22.80px;font-size:19px;font-weight:400;color:#161513;white-space:nowrap;left:840.50px;">PK2IGAC000062637</div>
<div style="position:absolute;top:551.69px;height:22.80px;line-height:22.80px;font-size:19px;font-weight:400;color:#161513;white-space:nowrap;left:1111.50px;">PK2IGAC000062637</div>
<div style="position:absolute;top:551.69px;height:22.80px;line-height:22.80px;font-size:19px;font-weight:400;color:#161513;white-space:nowrap;left:1335.30px;">DataEnrichment</div>
<div style="position:absolute;top:551.69px;height:22.80px;line-height:22.80px;font-size:19px;font-weight:400;color:#161513;white-space:nowrap;letter-spacing:0.5px;left:1606.00px;">22-04-20</div>
<div class="abs" style="left:372.2px;top:604.23px;width:18.6px;height:18.6px;border:1.8px solid #161513;border-radius:2.5px;"></div>
<div style="position:absolute;top:605.05px;height:23.40px;line-height:23.40px;font-size:19.5px;font-weight:400;color:#0e6a9c;white-space:nowrap;letter-spacing:-0.45px;left:413.00px;">Edit</div>
<div class="abs" style="left:482px;top:602.23px;width:67.8px;height:27.9px;background:#ad6210;border-radius:6.5px;"></div>
<div style="position:absolute;top:608.00px;height:18.00px;line-height:18.00px;font-size:15px;font-weight:700;color:#fff;white-space:nowrap;left:481.90px;width:68px;text-align:center;transform:scaleX(0.86);">Medium</div>
<div style="position:absolute;top:605.34px;height:22.80px;line-height:22.80px;font-size:19px;font-weight:400;color:#161513;white-space:nowrap;letter-spacing:-0.14px;left:610.00px;">Guarantee SBLC Advis…</div>
<div style="position:absolute;top:605.34px;height:22.80px;line-height:22.80px;font-size:19px;font-weight:400;color:#161513;white-space:nowrap;left:840.50px;">PK2GADC000062636</div>
<div style="position:absolute;top:605.34px;height:22.80px;line-height:22.80px;font-size:19px;font-weight:400;color:#161513;white-space:nowrap;left:1111.50px;">PK2GADC000062636</div>
<div style="position:absolute;top:605.34px;height:22.80px;line-height:22.80px;font-size:19px;font-weight:400;color:#161513;white-space:nowrap;left:1335.30px;">DataEnrichment</div>
<div style="position:absolute;top:605.34px;height:22.80px;line-height:22.80px;font-size:19px;font-weight:400;color:#161513;white-space:nowrap;letter-spacing:0.5px;left:1606.00px;">22-04-20</div>
<div class="abs" style="left:372.2px;top:657.88px;width:18.6px;height:18.6px;border:1.8px solid #161513;border-radius:2.5px;"></div>
<div style="position:absolute;top:658.70px;height:23.40px;line-height:23.40px;font-size:19.5px;font-weight:400;color:#0e6a9c;white-space:nowrap;letter-spacing:-0.45px;left:413.00px;">Edit</div>
<div class="abs" style="left:482px;top:655.88px;width:67.8px;height:27.9px;background:#ad6210;border-radius:6.5px;"></div>
<div style="position:absolute;top:661.65px;height:18.00px;line-height:18.00px;font-size:15px;font-weight:700;color:#fff;white-space:nowrap;left:481.90px;width:68px;text-align:center;transform:scaleX(0.86);">Medium</div>
<div style="position:absolute;top:658.99px;height:22.80px;line-height:22.80px;font-size:19px;font-weight:400;color:#161513;white-space:nowrap;letter-spacing:-0.14px;left:610.00px;">Guarantee SBLC Advis…</div>
<div style="position:absolute;top:658.99px;height:22.80px;line-height:22.80px;font-size:19px;font-weight:400;color:#161513;white-space:nowrap;left:840.50px;">PK2GADC000062547</div>
<div style="position:absolute;top:658.99px;height:22.80px;line-height:22.80px;font-size:19px;font-weight:400;color:#161513;white-space:nowrap;left:1111.50px;">PK2GADC000062547</div>
<div style="position:absolute;top:658.99px;height:22.80px;line-height:22.80px;font-size:19px;font-weight:400;color:#161513;white-space:nowrap;left:1335.30px;">Registration</div>
<div style="position:absolute;top:658.99px;height:22.80px;line-height:22.80px;font-size:19px;font-weight:400;color:#161513;white-space:nowrap;letter-spacing:0.5px;left:1606.00px;">22-04-20</div>
<div class="abs" style="left:372.2px;top:711.52px;width:18.6px;height:18.6px;border:1.8px solid #161513;border-radius:2.5px;"></div>
<div style="position:absolute;top:712.35px;height:23.40px;line-height:23.40px;font-size:19.5px;font-weight:400;color:#0e6a9c;white-space:nowrap;letter-spacing:-0.45px;left:413.00px;">Edit</div>
<div class="abs" style="left:482px;top:709.52px;width:67.8px;height:27.9px;background:#ad6210;border-radius:6.5px;"></div>
<div style="position:absolute;top:715.30px;height:18.00px;line-height:18.00px;font-size:15px;font-weight:700;color:#fff;white-space:nowrap;left:481.90px;width:68px;text-align:center;transform:scaleX(0.86);">Medium</div>
<div style="position:absolute;top:712.64px;height:22.80px;line-height:22.80px;font-size:19px;font-weight:400;color:#161513;white-space:nowrap;letter-spacing:-0.14px;left:610.00px;">Guarantee SBLC Advis…</div>
<div style="position:absolute;top:712.64px;height:22.80px;line-height:22.80px;font-size:19px;font-weight:400;color:#161513;white-space:nowrap;left:840.50px;">PK2GADC000062545</div>
<div style="position:absolute;top:712.64px;height:22.80px;line-height:22.80px;font-size:19px;font-weight:400;color:#161513;white-space:nowrap;left:1111.50px;">PK2GADC000062545</div>
<div style="position:absolute;top:712.64px;height:22.80px;line-height:22.80px;font-size:19px;font-weight:400;color:#161513;white-space:nowrap;left:1335.30px;">Registration</div>
<div style="position:absolute;top:712.64px;height:22.80px;line-height:22.80px;font-size:19px;font-weight:400;color:#161513;white-space:nowrap;letter-spacing:0.5px;left:1606.00px;">22-04-20</div>
<div class="abs" style="left:372.2px;top:765.18px;width:18.6px;height:18.6px;border:1.8px solid #161513;border-radius:2.5px;"></div>
<div style="position:absolute;top:766.00px;height:23.40px;line-height:23.40px;font-size:19.5px;font-weight:400;color:#0e6a9c;white-space:nowrap;letter-spacing:-0.45px;left:413.00px;">Edit</div>
<div class="abs" style="left:482px;top:763.18px;width:67.8px;height:27.9px;background:#ad6210;border-radius:6.5px;"></div>
<div style="position:absolute;top:768.95px;height:18.00px;line-height:18.00px;font-size:15px;font-weight:700;color:#fff;white-space:nowrap;left:481.90px;width:68px;text-align:center;transform:scaleX(0.86);">Medium</div>
<div style="position:absolute;top:766.29px;height:22.80px;line-height:22.80px;font-size:19px;font-weight:400;color:#161513;white-space:nowrap;left:610.00px;">Export LC Transfer Clo…</div>
<div style="position:absolute;top:766.29px;height:22.80px;line-height:22.80px;font-size:19px;font-weight:400;color:#161513;white-space:nowrap;left:840.50px;">PK2IELT000062061</div>
<div style="position:absolute;top:766.29px;height:22.80px;line-height:22.80px;font-size:19px;font-weight:400;color:#161513;white-space:nowrap;left:1111.50px;">PK2IELT000062061</div>
<div style="position:absolute;top:766.29px;height:22.80px;line-height:22.80px;font-size:19px;font-weight:400;color:#161513;white-space:nowrap;left:1335.30px;">Registration</div>
<div style="position:absolute;top:766.29px;height:22.80px;line-height:22.80px;font-size:19px;font-weight:400;color:#161513;white-space:nowrap;letter-spacing:0.5px;left:1606.00px;">22-04-20</div>
<div class="abs" style="left:372.2px;top:818.83px;width:18.6px;height:18.6px;border:1.8px solid #161513;border-radius:2.5px;"></div>
<div style="position:absolute;top:819.65px;height:23.40px;line-height:23.40px;font-size:19.5px;font-weight:400;color:#0e6a9c;white-space:nowrap;letter-spacing:-0.45px;left:413.00px;">Edit</div>
<div class="abs" style="left:482px;top:816.83px;width:67.8px;height:27.9px;background:#ad6210;border-radius:6.5px;"></div>
<div style="position:absolute;top:822.60px;height:18.00px;line-height:18.00px;font-size:15px;font-weight:700;color:#fff;white-space:nowrap;left:481.90px;width:68px;text-align:center;transform:scaleX(0.86);">Medium</div>
<div style="position:absolute;top:819.94px;height:22.80px;line-height:22.80px;font-size:19px;font-weight:400;color:#161513;white-space:nowrap;left:610.00px;">Export LC Transfer Clo…</div>
<div style="position:absolute;top:819.94px;height:22.80px;line-height:22.80px;font-size:19px;font-weight:400;color:#161513;white-space:nowrap;left:840.50px;">PK2IELT000062058</div>
<div style="position:absolute;top:819.94px;height:22.80px;line-height:22.80px;font-size:19px;font-weight:400;color:#161513;white-space:nowrap;left:1111.50px;">PK2IELT000062058</div>
<div style="position:absolute;top:819.94px;height:22.80px;line-height:22.80px;font-size:19px;font-weight:400;color:#161513;white-space:nowrap;left:1335.30px;">Approval Task Level 1</div>
<div style="position:absolute;top:819.94px;height:22.80px;line-height:22.80px;font-size:19px;font-weight:400;color:#161513;white-space:nowrap;letter-spacing:0.5px;left:1606.00px;">22-04-20</div>
<div class="abs" style="left:372.2px;top:872.48px;width:18.6px;height:18.6px;border:1.8px solid #161513;border-radius:2.5px;"></div>
<div style="position:absolute;top:873.30px;height:23.40px;line-height:23.40px;font-size:19.5px;font-weight:400;color:#0e6a9c;white-space:nowrap;letter-spacing:-0.45px;left:413.00px;">Edit</div>
<div class="abs" style="left:482px;top:870.48px;width:67.8px;height:27.9px;background:#ad6210;border-radius:6.5px;"></div>
<div style="position:absolute;top:876.25px;height:18.00px;line-height:18.00px;font-size:15px;font-weight:700;color:#fff;white-space:nowrap;left:481.90px;width:68px;text-align:center;transform:scaleX(0.86);">Medium</div>
<div style="position:absolute;top:873.59px;height:22.80px;line-height:22.80px;font-size:19px;font-weight:400;color:#161513;white-space:nowrap;left:610.00px;">Export LC Transfer Ca…</div>
<div style="position:absolute;top:873.59px;height:22.80px;line-height:22.80px;font-size:19px;font-weight:400;color:#161513;white-space:nowrap;left:840.50px;">PK2ELCT000062009</div>
<div style="position:absolute;top:873.59px;height:22.80px;line-height:22.80px;font-size:19px;font-weight:400;color:#161513;white-space:nowrap;left:1111.50px;">PK2ELCT000062009</div>
<div style="position:absolute;top:873.59px;height:22.80px;line-height:22.80px;font-size:19px;font-weight:400;color:#161513;white-space:nowrap;left:1335.30px;">Reject Approval</div>
<div style="position:absolute;top:873.59px;height:22.80px;line-height:22.80px;font-size:19px;font-weight:400;color:#161513;white-space:nowrap;letter-spacing:0.5px;left:1606.00px;">22-04-20</div>
<div class="abs" style="left:372.2px;top:926.12px;width:18.6px;height:18.6px;border:1.8px solid #161513;border-radius:2.5px;"></div>
<div style="position:absolute;top:926.95px;height:23.40px;line-height:23.40px;font-size:19.5px;font-weight:400;color:#0e6a9c;white-space:nowrap;letter-spacing:-0.45px;left:413.00px;">Edit</div>
<div class="abs" style="left:482px;top:924.12px;width:67.8px;height:27.9px;background:#ad6210;border-radius:6.5px;"></div>
<div style="position:absolute;top:929.90px;height:18.00px;line-height:18.00px;font-size:15px;font-weight:700;color:#fff;white-space:nowrap;left:481.90px;width:68px;text-align:center;transform:scaleX(0.86);">Medium</div>
<div style="position:absolute;top:927.24px;height:22.80px;line-height:22.80px;font-size:19px;font-weight:400;color:#161513;white-space:nowrap;letter-spacing:0.4px;left:610.00px;">ExportLC Amendment…</div>
<div style="position:absolute;top:927.24px;height:22.80px;line-height:22.80px;font-size:19px;font-weight:400;color:#161513;white-space:nowrap;left:840.50px;">PK2ELCA000061569</div>
<div style="position:absolute;top:927.24px;height:22.80px;line-height:22.80px;font-size:19px;font-weight:400;color:#161513;white-space:nowrap;left:1111.50px;">PK2ELCA000061569</div>
<div style="position:absolute;top:927.24px;height:22.80px;line-height:22.80px;font-size:19px;font-weight:400;color:#161513;white-space:nowrap;left:1335.30px;">DataEnrichment</div>
<div style="position:absolute;top:927.24px;height:22.80px;line-height:22.80px;font-size:19px;font-weight:400;color:#161513;white-space:nowrap;letter-spacing:0.5px;left:1606.00px;">22-04-20</div>
<div class="abs" style="left:1875px;top:204px;width:16px;height:760px;background:#fff;"></div>
<div class="abs" style="left:1877.2px;top:221px;width:12.8px;height:481.5px;background:#7a7a7a;"></div>
<svg class="abs" style="left:1877px;top:209px" width="13" height="8" viewBox="0 0 13 8"><polygon points="2.5,6.5 6.5,2.5 10.5,6.5" fill="#7a7a7a"/></svg>
<svg class="abs" style="left:1877px;top:947px" width="13" height="8" viewBox="0 0 13 8"><polygon points="2.5,1.5 6.5,5.5 10.5,1.5" fill="#7a7a7a"/></svg>
<div class="abs" style="left:1904.2px;top:103px;width:12.8px;height:805px;background:#7a7a7a;"></div>
<svg class="abs" style="left:1904px;top:89px" width="13" height="10" viewBox="0 0 13 10"><polygon points="3,8 6.6,4 10.2,8" fill="#7a7a7a"/></svg>
<div class="abs" style="left:379px;top:963px;width:901px;height:2px;background:#7a7a7a;"></div>
</body></html>
